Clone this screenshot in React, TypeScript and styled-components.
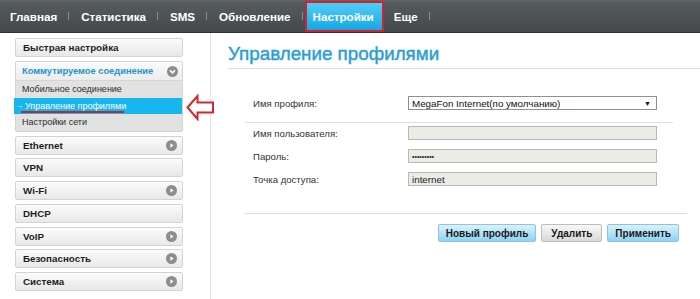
import React from "react";
import styled, { createGlobalStyle, css } from "styled-components";

const Global = createGlobalStyle`
  html, body { margin: 0; padding: 0; background: #fff; }
  body { font-family: "Liberation Sans", Arial, sans-serif; }
  * { box-sizing: border-box; }
`;

const Page = styled.div`
  width: 700px;
  height: 299px;
  overflow: hidden;
  display: flex;
  flex-direction: column;
`;

const NavBar = styled.div`
  height: 33px;
  flex: none;
  display: flex;
  align-items: stretch;
  background: linear-gradient(#63676a 0px, #555a5c 3px, #45494b 100%);
  border-bottom: 1px solid #2f3234;
`;

const NavItem = styled.div<{ $active?: boolean }>`
  display: flex;
  align-items: center;
  padding: 0 9px 0 10px;
  font-size: 11.6px;
  font-weight: bold;
  color: #fff;
  white-space: nowrap;
  ${(p) =>
    p.$active &&
    css`
      margin: 1px 0 0 0;
      padding: 0 8px 0 6px;
      background: linear-gradient(#52cdf7, #16a8e6);
      border: 2px solid #d2232b;
    `}
`;

const NavSep = styled.div`
  align-self: center;
  width: 1px;
  height: 8px;
  background: #8a8e90;
  margin: 0 2px;
`;

const Body = styled.div`
  flex: 1;
  display: flex;
  position: relative;
`;

const Sidebar = styled.div`
  width: 168px;
  margin-left: 15px;
  padding-top: 5px;
  display: flex;
  flex-direction: column;
`;

const Gutter = styled.div`
  width: 27px;
  flex: none;
`;

const menuBox = css`
  border: 1px solid #d3d3d3;
  border-radius: 2px;
  background: linear-gradient(#fbfbfb, #e8e8e8);
`;

const MenuRow = styled.div<{ $gap?: number }>`
  ${menuBox};
  height: 19px;
  margin-bottom: ${(p) => p.$gap ?? 3.7}px;
  display: flex;
  align-items: center;
  justify-content: space-between;
  padding: 0 5px 0 7px;
  font-size: 9.8px;
  font-weight: bold;
  color: #1e1e1e;
  white-space: nowrap;
`;

const Group = styled.div`
  ${menuBox};
  margin-bottom: 4px;
  background: #e2e2e2;
`;

const GroupHeader = styled.div`
  height: 19px;
  display: flex;
  align-items: center;
  justify-content: space-between;
  padding: 0 4px 0 6px;
  font-size: 9.3px;
  font-weight: bold;
  white-space: nowrap;
  color: #1f93cc;
  background: linear-gradient(#fbfbfb, #ececec);
  border-bottom: 1px solid #d6d6d6;
`;

const SubItem = styled.div<{ $active?: boolean }>`
  position: relative;
  height: 16.6px;
  display: flex;
  align-items: center;
  padding-left: 6px;
  font-size: 9px;
  color: #2a2a2a;
  white-space: nowrap;
  ${(p) =>
    p.$active &&
    css`
      margin: 0 0 0 -2px;
      padding-left: 1px;
      background: #17b6f0;
      color: #fff;
      &::after {
        content: "";
        position: absolute;
        left: 7px;
        width: 103px;
        top: 13px;
        height: 2px;
        background: #c1272d;
      }
    `}
`;

const SubArrow = styled.span`
  font-size: 8px;
  margin-right: 2px;
`;

const Content = styled.div`
  flex: 1;
  border-left: 1px solid #e4e4e4;
  padding-left: 17px;
  display: flex;
  flex-direction: column;
`;

const Title = styled.h1`
  margin: 9px 0 0 0;
  padding-bottom: 2px;
  font-size: 18.8px;
  line-height: 24px;
  font-weight: normal;
  -webkit-text-stroke: 0.45px #2a9ed6;
  color: #2a9ed6;
  border-bottom: 1px solid #dcdcdc;
`;

const Form = styled.div`
  margin-left: 17px;
  width: 428px;
  padding-top: 27px;
`;

const ProfileSection = styled.div`
  padding: 0 16px 12px 8px;
  border-bottom: 1px solid #dedede;
`;

const FieldsSection = styled.div`
  padding: 3px 16px 0 8px;
  display: flex;
  flex-direction: column;
  gap: 9px;
`;

const Row = styled.div`
  display: grid;
  grid-template-columns: 155px 249px;
  align-items: center;
  height: 14px;
`;

const Label = styled.label`
  font-size: 9.6px;
  color: #333;
`;

const SelectBox = styled.div`
  height: 14px;
  border: 1px solid #8f8f8f;
  background: #fff;
  display: flex;
  align-items: center;
  justify-content: space-between;
  padding: 0 5px 0 3px;
  font-size: 9.8px;
  color: #111;
`;

const Caret = styled.span`
  font-size: 7px;
  color: #111;
`;

const Field = styled.input<{ $dots?: boolean }>`
  height: 14px;
  width: 249px;
  border: 1px solid #b9b9b4;
  background: #ecece7;
  padding: 0 3px;
  margin: 0;
  font-family: "Liberation Sans", Arial, sans-serif;
  font-size: ${(p) => (p.$dots ? "7px" : "9.8px")};
  color: #222;
  outline: none;
`;

const ButtonBar = styled.div`
  margin-left: 17px;
  margin-top: 27px;
  width: 442px;
  border-top: 1px solid #dcdcdc;
  padding: 10px 8px 0 0;
  display: flex;
  justify-content: flex-end;
  gap: 5px;
`;

const Button = styled.button<{ $variant?: "blue" | "gray" }>`
  height: 18px;
  padding: 0 7px;
  font-family: "Liberation Sans", Arial, sans-serif;
  font-size: 10px;
  font-weight: bold;
  color: #1a1a1a;
  border-radius: 2px;
  cursor: pointer;
  ${(p) =>
    p.$variant === "gray"
      ? css`
          padding: 0 9px;
          border: 1px solid #bdbdbd;
          background: linear-gradient(#f8f8f8, #d9d9d9);
        `
      : css`
          border: 1px solid #8fc4dc;
          background: linear-gradient(#d9f2fc, #8fd3f2);
        `}
`;

const Annotation = styled.svg`
  position: absolute;
  left: 186px;
  top: 61px;
`;

const RoundIcon = ({ dir }: { dir: "down" | "right" }) => (
  <svg width="11" height="11" viewBox="0 0 11 11">
    <circle cx="5.5" cy="5.5" r="5.5" fill="#8d8d8d" />
    {dir === "down" ? (
      <path d="M3 4.3 L5.5 6.8 L8 4.3" stroke="#fff" strokeWidth="1.6" fill="none" />
    ) : (
      <path d="M4.4 3.2 L7.6 5.5 L4.4 7.8 Z" fill="#fff" />
    )}
  </svg>
);

const navItems = ["Главная", "Статистика", "SMS", "Обновление", "Настройки", "Еще"];

const menu: { label: string; arrow: boolean }[] = [
  { label: "Ethernet", arrow: true },
  { label: "VPN", arrow: false },
  { label: "Wi-Fi", arrow: true },
  { label: "DHCP", arrow: false },
  { label: "VoIP", arrow: true },
  { label: "Безопасность", arrow: true },
  { label: "Система", arrow: true },
];

export default function App() {
  return (
    <>
      <Global />
      <Page>
        <NavBar>
          {navItems.map((n) => (
            <React.Fragment key={n}>
              <NavItem $active={n === "Настройки"}>{n}</NavItem>
              {n !== "Настройки" && <NavSep />}
            </React.Fragment>
          ))}
        </NavBar>
        <Body>
          <Sidebar>
            <MenuRow $gap={4}>Быстрая настройка</MenuRow>
            <Group>
              <GroupHeader>
                Коммутируемое соединение
                <RoundIcon dir="down" />
              </GroupHeader>
              <SubItem>Мобильное соединение</SubItem>
              <SubItem $active>
                <SubArrow>→</SubArrow>Управление профилями
              </SubItem>
              <SubItem>Настройки сети</SubItem>
            </Group>
            {menu.map((m) => (
              <MenuRow key={m.label}>
                {m.label}
                {m.arrow && <RoundIcon dir="right" />}
              </MenuRow>
            ))}
          </Sidebar>
          <Gutter />
          <Content>
            <Title>Управление профилями</Title>
            <Form>
              <ProfileSection>
                <Row>
                  <Label>Имя профиля:</Label>
                  <SelectBox>
                    MegaFon Internet(по умолчанию)
                    <Caret>▼</Caret>
                  </SelectBox>
                </Row>
              </ProfileSection>
              <FieldsSection>
                <Row>
                  <Label>Имя пользователя:</Label>
                  <Field readOnly value="" />
                </Row>
                <Row>
                  <Label>Пароль:</Label>
                  <Field $dots readOnly value="•••••••••" />
                </Row>
                <Row>
                  <Label>Точка доступа:</Label>
                  <Field readOnly value="internet" />
                </Row>
              </FieldsSection>
            </Form>
            <ButtonBar>
              <Button>Новый профиль</Button>
              <Button $variant="gray">Удалить</Button>
              <Button>Применить</Button>
            </ButtonBar>
          </Content>
          <Annotation width="29" height="27" viewBox="0 0 29 27">
            <path
              d="M1.5 13.5 L11.5 2 L11.5 8.5 L27 8.5 L27 18.5 L11.5 18.5 L11.5 25 Z"
              fill="#fff"
              stroke="#d4262c"
              strokeWidth="2"
              strokeLinejoin="miter"
            />
          </Annotation>
        </Body>
      </Page>
    </>
  );
}
